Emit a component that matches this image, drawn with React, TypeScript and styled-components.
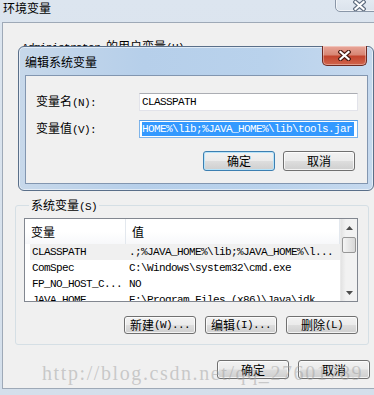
import React from 'react';
import styled, { createGlobalStyle } from 'styled-components';

const CJK = `"Noto Sans CJK SC", "Microsoft YaHei", sans-serif`;
const MONO = `"Liberation Mono", "DejaVu Sans Mono", monospace`;

const Global = createGlobalStyle`
  html, body { margin: 0; padding: 0; overflow: hidden; background: #d8e2ed; }
  #root { width: 374px; height: 395px; }
  * { box-sizing: border-box; }
`;

const Screen = styled.div`
  position: relative;
  width: 374px;
  height: 395px;
  overflow: hidden;
  background: linear-gradient(180deg, #dce5ef 0%, #d4dfeb 100%);
  font-family: ${CJK};
  font-size: 12px;
  color: #000;
`;

const TitleBar = styled.div`
  height: 22px;
  padding-left: 3px;
  line-height: 16px;
  font-size: 12px;
`;

const CloseBtn = styled.div<{ $active?: boolean }>`
  position: absolute;
  display: flex;
  align-items: center;
  justify-content: center;
  border-radius: 0 0 5px 5px;
  ${(p) =>
    p.$active
      ? `
    left: 303px; top: -1px; width: 45px; height: 20px;
    border: 1px solid #6d2a22;
    border-top: none;
    background: linear-gradient(180deg, #e9a699 0%, #d88775 45%, #c4452e 55%, #d0654c 100%);
    box-shadow: inset 0 0 0 1px rgba(255,255,255,0.35);
  `
      : `
    left: 335px; top: -8px; width: 48px; height: 20px;
    border: 1px solid #8a97a8;
    background: linear-gradient(180deg, #e8eef5 0%, #dbe3ec 100%);
    box-shadow: inset 0 0 0 1px rgba(255,255,255,0.6);
    padding-top: 6px;
  `}
`;

const Client = styled.div`
  margin-left: 2px;
  width: 380px;
  height: 367px;
  border: 1px solid #9ea9b7;
  background: #f0f0f0;
  display: flex;
  flex-direction: column;
`;

const HiddenLegend = styled.div`
  margin: 15px 0 0 19px;
  height: 16px;
  line-height: 16px;
  white-space: nowrap;
`;

const Mono = styled.span`
  font-family: ${MONO};
  font-size: 11px;
  letter-spacing: -0.6px;
`;

const Group = styled.fieldset`
  margin: 144px 0 0 12px;
  width: 354px;
  padding: 6px 10px 10px 8px;
  border: 1px solid #d5dfe5;
  border-radius: 3px;
  min-width: 0;
`;

const Legend = styled.legend`
  margin-left: 5px;
  padding: 0 2px;
  line-height: 14px;
  height: 14px;
  white-space: nowrap;
`;

const List = styled.div`
  position: relative;
  width: 334px;
  height: 84px;
  border: 1px solid #828790;
  background: #fff;
  display: flex;
  overflow: hidden;
`;

const ListBody = styled.div`
  flex: 1;
  display: flex;
  flex-direction: column;
  min-width: 0;
`;

const Header = styled.div`
  display: flex;
  height: 25px;
  flex: none;
  background: linear-gradient(180deg, #ffffff 0%, #ffffff 50%, #f7f8fa 100%);
`;

const HeadCell = styled.div<{ $w?: number }>`
  ${(p) => (p.$w ? `width: ${p.$w}px;` : 'flex: 1;')}
  padding-left: 6px;
  line-height: 25px;
  font-size: 12px;
  border-right: 1px solid #e3e8ee;
`;

const Row = styled.div<{ $sel?: boolean }>`
  display: flex;
  height: 16px;
  flex: none;
  align-items: center;
  white-space: nowrap;
  margin-left: 5px;
  background: ${(p) => (p.$sel ? '#f0f0f0' : 'transparent')};
`;

const Cell = styled.div<{ $w?: number }>`
  ${(p) => (p.$w ? `width: ${p.$w}px; flex: none;` : 'flex: 1;')}
  padding-left: 2px;
  overflow: hidden;
  font-family: ${MONO};
  font-size: 11px;
  letter-spacing: -0.6px;
  line-height: 16px;
`;

const ScrollBar = styled.div`
  width: 17px;
  flex: none;
  display: flex;
  flex-direction: column;
  background: linear-gradient(90deg, #e3e3e3 0%, #f2f2f2 30%, #f2f2f2 100%);
  border-left: 1px solid #eaeaea;
`;

const Arrow = styled.div<{ $grow?: boolean }>`
  height: 17px;
  display: flex;
  align-items: center;
  justify-content: center;
  ${(p) => (p.$grow ? 'margin-top: auto;' : '')}
`;

const Thumb = styled.div`
  margin: 1px 1px 0 1px;
  height: 16px;
  border: 1px solid #979797;
  border-radius: 2px;
  background: linear-gradient(90deg, #f5f5f5 0%, #e6e6e6 50%, #d8d8d8 100%);
`;

const ButtonRow = styled.div<{ $pad?: number; $top?: number; $gap?: number }>`
  display: flex;
  justify-content: flex-end;
  gap: ${(p) => p.$gap ?? 9}px;
  margin-top: ${(p) => p.$top ?? 0}px;
  padding-right: ${(p) => p.$pad ?? 0}px;
`;

const Button = styled.div<{ $h?: number; $def?: boolean }>`
  width: 72px;
  height: ${(p) => p.$h ?? 19}px;
  border: 1px solid ${(p) => (p.$def ? '#3c7fb1' : '#707070')};
  border-radius: 3px;
  background: linear-gradient(180deg, #f2f2f2 0%, #ebebeb 48%, #dddddd 52%, #cfcfcf 100%);
  box-shadow: inset 0 0 0 1px ${(p) => (p.$def ? '#b7e3f9' : 'rgba(255,255,255,0.75)')};
  display: flex;
  align-items: center;
  justify-content: center;
  font-size: 12px;
  line-height: 14px;
  white-space: nowrap;
`;

const Dialog = styled.div`
  position: absolute;
  left: 18px;
  top: 46px;
  width: 356px;
  height: 145px;
  border: 1px solid #5a6f89;
  border-radius: 6px;
  background: linear-gradient(90deg, #c7d8ea 0%, #b6cfea 35%, #b9d2ec 70%, #c6d9ee 100%);
  box-shadow: inset 0 0 0 1px rgba(255, 255, 255, 0.55);
  display: flex;
  flex-direction: column;
`;

const DialogTitle = styled.div`
  height: 28px;
  flex: none;
  padding: 8px 0 0 6px;
  line-height: 14px;
  font-size: 12px;
`;

const DialogClient = styled.div`
  flex: 1;
  margin: 0 5px 6px 6px;
  border: 1px solid #8296b0;
  background: #f0f0f0;
  display: flex;
  flex-direction: column;
  padding: 17px 9px 0 10px;
`;

const Field = styled.div<{ $top?: number }>`
  display: flex;
  align-items: center;
  margin-top: ${(p) => p.$top ?? 0}px;
`;

const Label = styled.div`
  width: 103px;
  line-height: 14px;
  white-space: nowrap;
`;

const Input = styled.div<{ $focus?: boolean }>`
  width: 219px;
  height: 18px;
  background: #fff;
  border: 1px solid ${(p) => (p.$focus ? '#7eb4ea' : '#e2e3ea')};
  border-top-color: ${(p) => (p.$focus ? '#569de5' : '#abadb3')};
  padding-left: 2px;
  display: flex;
  align-items: center;
  overflow: hidden;
  white-space: nowrap;
  font-family: ${MONO};
  font-size: 11px;
  letter-spacing: -0.6px;
`;

const Selected = styled.span`
  background: #3399ff;
  color: #fff;
  line-height: 14px;
  padding-right: 2px;
`;

const Watermark = styled.div`
  position: absolute;
  left: 42px;
  top: 362px;
  font-family: "Liberation Serif", serif;
  font-size: 20px;
  letter-spacing: 1.6px;
  color: rgba(160, 160, 160, 0.5);
  white-space: nowrap;
  pointer-events: none;
`;

const XGlyph = ({ active }: { active?: boolean }) => (
  <svg width="13" height="11" viewBox="0 0 13 11">
    <path
      d="M2.5 2 L10.5 9 M10.5 2 L2.5 9"
      stroke={active ? '#4a1a12' : '#5f6d7f'}
      strokeWidth="4.4"
      strokeLinecap="square"
    />
    <path d="M2.5 2 L10.5 9 M10.5 2 L2.5 9" stroke="#fff" strokeWidth="2.2" strokeLinecap="square" />
  </svg>
);

const Tri = ({ up }: { up?: boolean }) => (
  <svg width="7" height="4" viewBox="0 0 7 4">
    <path d={up ? 'M0 4 L3.5 0 L7 4 Z' : 'M0 0 L3.5 4 L7 0 Z'} fill="#4d4d4d" />
  </svg>
);

const rows = [
  { name: 'CLASSPATH', value: '.;%JAVA_HOME%\\lib;%JAVA_HOME%\\l...', sel: true },
  { name: 'ComSpec', value: 'C:\\Windows\\system32\\cmd.exe' },
  { name: 'FP_NO_HOST_C...', value: 'NO' },
  { name: 'JAVA_HOME', value: 'E:\\Program Files (x86)\\Java\\jdk' },
];

export default function App() {
  return (
    <Screen>
      <Global />
      <TitleBar>环境变量</TitleBar>
      <CloseBtn>
        <XGlyph />
      </CloseBtn>
      <Client>
        <HiddenLegend>
          <Mono>Administrator </Mono>的用户变量<Mono>(U)</Mono>
        </HiddenLegend>
        <Group>
          <Legend>
            系统变量<Mono>(S)</Mono>
          </Legend>
          <List>
            <ListBody>
              <Header>
                <HeadCell $w={101}>变量</HeadCell>
                <HeadCell>值</HeadCell>
              </Header>
              {rows.map((r) => (
                <Row key={r.name} $sel={r.sel}>
                  <Cell $w={97}>{r.name}</Cell>
                  <Cell>{r.value}</Cell>
                </Row>
              ))}
            </ListBody>
            <ScrollBar>
              <Arrow>
                <Tri up />
              </Arrow>
              <Thumb />
              <Arrow $grow>
                <Tri />
              </Arrow>
            </ScrollBar>
          </List>
          <ButtonRow $top={14}>
            <Button $h={18}>
              新建<Mono>(W)...</Mono>
            </Button>
            <Button $h={18}>
              编辑<Mono>(I)...</Mono>
            </Button>
            <Button $h={18}>
              删除<Mono>(L)</Mono>
            </Button>
          </ButtonRow>
        </Group>
        <ButtonRow $top={15} $pad={11}>
          <Button>确定</Button>
          <Button>取消</Button>
        </ButtonRow>
      </Client>

      <Dialog>
        <DialogTitle>编辑系统变量</DialogTitle>
        <CloseBtn $active>
          <XGlyph active />
        </CloseBtn>
        <DialogClient>
          <Field>
            <Label>
              变量名<Mono>(N):</Mono>
            </Label>
            <Input>CLASSPATH</Input>
          </Field>
          <Field $top={9}>
            <Label>
              变量值<Mono>(V):</Mono>
            </Label>
            <Input $focus>
              <Selected>HOME%\lib;%JAVA_HOME%\lib\tools.jar</Selected>
            </Input>
          </Field>
          <ButtonRow $top={13} $pad={3} $gap={8}>
            <Button $h={20} $def>
              确定
            </Button>
            <Button $h={20}>取消</Button>
          </ButtonRow>
        </DialogClient>
      </Dialog>
      <Watermark>http://blog.csdn.net/qq_27601789</Watermark>
    </Screen>
  );
}
